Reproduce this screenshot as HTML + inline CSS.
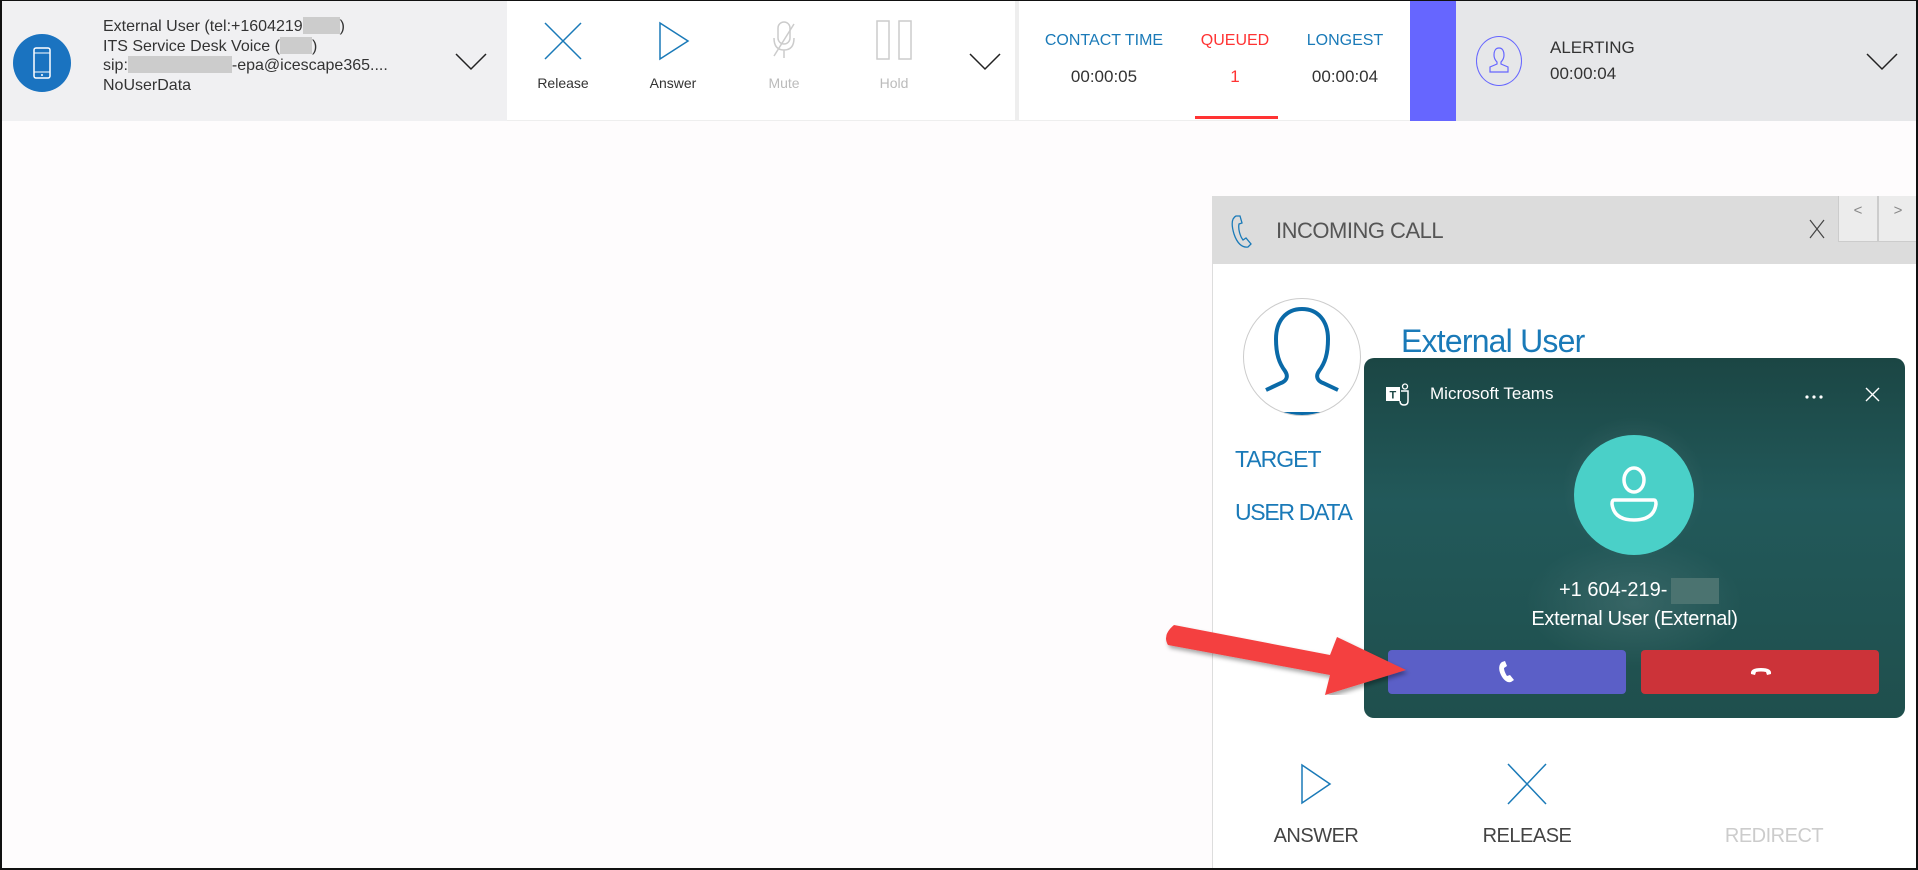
<!DOCTYPE html>
<html><head><meta charset="utf-8"><style>
*{margin:0;padding:0;box-sizing:border-box}
body{width:1918px;height:870px;overflow:hidden;background:#fefcfd;font-family:"Liberation Sans",sans-serif;position:relative}
.frame{position:absolute;inset:0;border:2px solid #111;border-top-width:1px;pointer-events:none;z-index:50}
.abs{position:absolute}
.t{position:absolute;white-space:nowrap}
</style></head><body>
<div class="frame"></div>
<!-- top bar -->
<div class="abs" style="left:0;top:0;width:507px;height:121px;background:#f0f0f2"></div>
<div class="abs" style="left:507px;top:0;width:508px;height:121px;background:#fff;border-bottom:1px solid #eee"></div>
<div class="abs" style="left:1015px;top:0;width:4px;height:121px;background:#eee"></div>
<div class="abs" style="left:1019px;top:0;width:391px;height:121px;background:#fff;border-bottom:1px solid #eee"></div>
<div class="abs" style="left:1410px;top:0;width:46px;height:121px;background:#6666ff"></div>
<div class="abs" style="left:1456px;top:0;width:462px;height:121px;background:#e6e7e9"></div>

<div class="abs" style="left:13px;top:34px;width:58px;height:58px;border-radius:50%;background:#1a73c0"></div>
<svg class="abs" style="left:32px;top:47px" width="20" height="32"><rect x="2" y="1" width="16" height="30" rx="2" fill="none" stroke="#fff" stroke-width="1.5"/><line x1="2" y1="6" x2="18" y2="6" stroke="#fff"/><line x1="2" y1="25" x2="18" y2="25" stroke="#fff"/><circle cx="10" cy="28" r="1" fill="#fff"/></svg>
<div class="t" style="left:103px;top:17px;font-size:16px;line-height:19.5px;color:#333">External User (tel:+1604219<span style="display:inline-block;width:37px;height:17px;background:#ccc;vertical-align:-3px"></span>)<br>ITS Service Desk Voice (<span style="display:inline-block;width:32px;height:17px;background:#ccc;vertical-align:-3px"></span>)<br>sip:<span style="display:inline-block;width:104px;height:17px;background:#ccc;vertical-align:-3px"></span>-epa@icescape365....<br>NoUserData</div>
<svg class="abs" style="left:455px;top:53px" width="32" height="18"><polyline points="1,1 16,16 31,1" fill="none" stroke="#222" stroke-width="1.5"/></svg>

<svg class="abs" style="left:543px;top:22px" width="40" height="38"><path d="M2 1L38 37M38 1L2 37" stroke="#1a7ab8" stroke-width="1.5"/></svg>
<div class="t" style="left:533px;top:75px;width:60px;text-align:center;font-size:14px;color:#333">Release</div>
<svg class="abs" style="left:658px;top:21px" width="32" height="40"><path d="M2 2L30 20L2 38Z" fill="none" stroke="#1a7ab8" stroke-width="1.5"/></svg>
<div class="t" style="left:643px;top:75px;width:60px;text-align:center;font-size:14px;color:#333">Answer</div>
<svg class="abs" style="left:770px;top:20px" width="28" height="40"><rect x="8" y="2" width="12" height="22" rx="6" fill="none" stroke="#ccc" stroke-width="1.5"/><path d="M4 18Q4 30 14 30Q24 30 24 18M14 30V38M4 36L24 4" fill="none" stroke="#ccc" stroke-width="1.5"/></svg>
<div class="t" style="left:754px;top:75px;width:60px;text-align:center;font-size:14px;color:#bbb">Mute</div>
<svg class="abs" style="left:876px;top:20px" width="38" height="40"><rect x="1" y="1" width="12" height="38" fill="none" stroke="#ccc" stroke-width="1.5"/><rect x="23" y="1" width="12" height="38" fill="none" stroke="#ccc" stroke-width="1.5"/></svg>
<div class="t" style="left:864px;top:75px;width:60px;text-align:center;font-size:14px;color:#bbb">Hold</div>
<svg class="abs" style="left:969px;top:53px" width="32" height="18"><polyline points="1,1 16,16 31,1" fill="none" stroke="#222" stroke-width="1.5"/></svg>

<div class="t" style="left:1034px;top:32px;width:140px;text-align:center;font-size:16px;color:#1a7ab8">CONTACT TIME</div>
<div class="t" style="left:1034px;top:67px;width:140px;text-align:center;font-size:17px;color:#333">00:00:05</div>
<div class="t" style="left:1185px;top:32px;width:100px;text-align:center;font-size:16px;color:#f33">QUEUED</div>
<div class="t" style="left:1185px;top:67px;width:100px;text-align:center;font-size:17px;color:#f33">1</div>
<div class="abs" style="left:1195px;top:116px;width:83px;height:3px;background:#f33"></div>
<div class="t" style="left:1295px;top:32px;width:100px;text-align:center;font-size:16px;color:#1a7ab8">LONGEST</div>
<div class="t" style="left:1295px;top:67px;width:100px;text-align:center;font-size:17px;color:#333">00:00:04</div>

<div class="abs" style="left:1476px;top:36px;width:46px;height:50px;border-radius:50%;border:1.5px solid #6666ff"></div>
<svg class="abs" style="left:1487px;top:46px" width="24" height="28"><path d="M12 2C8 2 7 6 7 9C7 13 9 15 10 16L10 18L3 21L3 26L21 26L21 21L14 18L14 16C15 15 17 13 17 9C17 6 16 2 12 2Z" fill="none" stroke="#6666ff" stroke-width="1.2"/></svg>
<div class="t" style="left:1550px;top:38px;font-size:17px;color:#333">ALERTING</div>
<div class="t" style="left:1550px;top:64px;font-size:17px;color:#333">00:00:04</div>
<svg class="abs" style="left:1866px;top:53px" width="32" height="18"><polyline points="1,1 16,16 31,1" fill="none" stroke="#222" stroke-width="1.5"/></svg>

<!-- panel -->
<div class="abs" style="left:1212px;top:196px;width:706px;height:674px;background:#fff;border-left:1px solid #ddd"></div>
<div class="abs" style="left:1212px;top:196px;width:706px;height:68px;background:#dcdcdc"></div>
<svg class="abs" style="left:1230px;top:214px" width="24" height="36"><path d="M6 2C2 4 1 10 4 20C7 29 12 34 18 33L21 30L16 24L13 26C10 22 8 15 9 10L12 9L10 2Z" fill="none" stroke="#1a7ab8" stroke-width="1.3"/></svg>
<div class="t" style="left:1276px;top:218px;font-size:22px;color:#555;letter-spacing:-0.5px">INCOMING CALL</div>
<svg class="abs" style="left:1809px;top:219px" width="16" height="20"><path d="M1 1L15 19M15 1L1 19" stroke="#444" stroke-width="1.2"/></svg>
<div class="abs" style="left:1838px;top:196px;width:40px;height:46px;background:#ececec;border:1px solid #ccc;border-top:none;color:#888;font-size:15px;text-align:center;line-height:30px">&lt;</div>
<div class="abs" style="left:1878px;top:196px;width:40px;height:46px;background:#ececec;border:1px solid #ccc;border-top:none;color:#888;font-size:15px;text-align:center;line-height:30px">&gt;</div>

<div class="abs" style="left:1243px;top:298px;width:118px;height:118px;border-radius:50%;border:1px solid #ccc;overflow:hidden;background:#fff">
<svg width="118" height="118"><path d="M22 91L37 84C42 82 45 78 41 72C35 64 32 55 32 40C32 22 42 10 58 10C74 10 84 22 84 40C84 55 81 64 75 72C71 78 74 82 79 84L94 91" fill="none" stroke="#0a6aa8" stroke-width="4"/><line x1="38" y1="115" x2="80" y2="115" stroke="#0a6aa8" stroke-width="4"/></svg></div>
<div class="t" style="left:1401px;top:323px;font-size:32px;color:#1a7ab8;letter-spacing:-0.8px">External User</div>
<div class="t" style="left:1235px;top:446px;font-size:23px;color:#1a7ab8;letter-spacing:-1px">TARGET</div>
<div class="t" style="left:1235px;top:499px;font-size:23px;color:#1a7ab8;letter-spacing:-1.3px">USER DATA</div>

<svg class="abs" style="left:1300px;top:763px" width="32" height="42"><path d="M2 2L30 21L2 40Z" fill="none" stroke="#1a7ab8" stroke-width="1.5"/></svg>
<div class="t" style="left:1266px;top:825px;width:100px;text-align:center;font-size:20px;color:#444;letter-spacing:-0.5px">ANSWER</div>
<svg class="abs" style="left:1506px;top:763px" width="42" height="42"><path d="M2 1L40 41M40 1L2 41" stroke="#1a7ab8" stroke-width="1.5"/></svg>
<div class="t" style="left:1467px;top:825px;width:120px;text-align:center;font-size:20px;color:#444;letter-spacing:-0.5px">RELEASE</div>
<div class="t" style="left:1714px;top:825px;width:120px;text-align:center;font-size:20px;color:#ccc;letter-spacing:-0.5px">REDIRECT</div>

<!-- teams popup -->
<div class="abs" style="left:1364px;top:358px;width:541px;height:360px;border-radius:10px;background:linear-gradient(180deg,#1b4644 0%,#22595a 40%,#1f4f4d 100%);overflow:hidden;z-index:5">
<div class="abs" style="left:200px;top:55px;width:140px;height:150px;border-radius:50%;background:radial-gradient(circle,rgba(255,255,255,.12),rgba(255,255,255,0) 70%)"></div>
<div class="abs" style="left:160px;top:180px;width:220px;height:130px;border-radius:50%;background:radial-gradient(ellipse,rgba(255,255,255,.1),rgba(255,255,255,0) 70%)"></div>
<svg class="abs" style="left:22px;top:25px" width="26" height="24"><rect x="0" y="4" width="14" height="14" fill="#fff"/><text x="3.5" y="15.5" font-size="11" font-weight="bold" fill="#1b4644" font-family="Liberation Sans">T</text><path d="M15 8H22V18Q22 22 18 22Q14 22 14 18" fill="none" stroke="#fff" stroke-width="1.5"/><circle cx="19" cy="3.5" r="2.5" fill="none" stroke="#fff" stroke-width="1.3"/></svg>
<div class="t" style="left:66px;top:26px;font-size:17px;color:#fff">Microsoft Teams</div>
<svg class="abs" style="left:440px;top:36px" width="20" height="6"><circle cx="3" cy="3" r="1.6" fill="#fff"/><circle cx="10" cy="3" r="1.6" fill="#fff"/><circle cx="17" cy="3" r="1.6" fill="#fff"/></svg>
<svg class="abs" style="left:501px;top:29px" width="15" height="15"><path d="M1 1L14 14M14 1L1 14" stroke="#fff" stroke-width="1.4"/></svg>
<div class="abs" style="left:210px;top:77px;width:120px;height:120px;border-radius:50%;background:#4ad0c8"></div>
<svg class="abs" style="left:244px;top:108px" width="52" height="58"><ellipse cx="26" cy="14" rx="10" ry="12" fill="none" stroke="#fff" stroke-width="3.5"/><path d="M6 34H46Q48 34 48 38Q46 54 26 54Q6 54 4 38Q4 34 6 34Z" fill="none" stroke="#fff" stroke-width="3.5"/></svg>
<div class="t" style="left:195px;top:221px;font-size:20px;color:#fff">+1 604-219-</div>
<div class="abs" style="left:307px;top:220px;width:48px;height:26px;background:#4b7370"></div>
<div class="t" style="left:0;top:250px;width:541px;text-align:center;font-size:20px;color:#fff;letter-spacing:-0.3px">External User (External)</div>
<div class="abs" style="left:24px;top:292px;width:238px;height:44px;border-radius:4px;background:#5b5fc7"></div>
<svg class="abs" style="left:134px;top:303px" width="18" height="22"><path d="M4 1C1 3 0 8 3 14C6 20 10 22 13 21L16 19L12 14L9 15C7 12 6 9 6 7L9 5L7 0Z" fill="#fff"/></svg>
<div class="abs" style="left:277px;top:292px;width:238px;height:44px;border-radius:4px;background:#cc3339"></div>
<svg class="abs" style="left:385px;top:306px" width="24" height="14"><path d="M2 10Q1 4 12 4Q23 4 22 10L18 11L17 8Q12 7 7 8L6 11Z" fill="#fff"/></svg>
</div>

<!-- red arrow -->
<svg class="abs" style="left:1160px;top:615px;z-index:10" width="260" height="80"><defs><filter id="s"><feDropShadow dx="2" dy="3" stdDeviation="2" flood-opacity=".35"/></filter></defs>
<g filter="url(#s)"><path d="M14 10L170 40L177 22L246 55L165 80L170 60L8 30Q2 20 14 10Z" fill="#f43f3f"/></g></svg>
</body></html>
